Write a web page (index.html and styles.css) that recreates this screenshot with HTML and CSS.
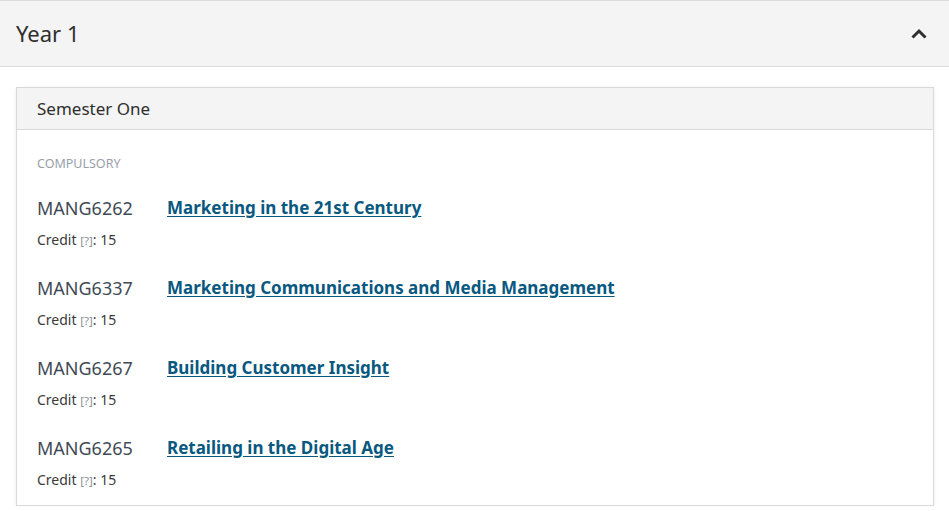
FILE: index.html
```html
<!DOCTYPE html>
<html lang="en">
<head>
<meta charset="utf-8">
<title>Year 1</title>
<link rel="stylesheet" href="styles.css">
</head>
<body>
<section class="year">
  <header class="year-header">
    <h2 class="year-title">Year 1</h2>
    <svg class="chevron" width="16" height="11" viewBox="0 0 16 11" aria-hidden="true">
      <polyline points="1.5,9.5 8,3 14.5,9.5" fill="none" stroke="#2f2f2f" stroke-width="3"/>
    </svg>
  </header>
  <div class="year-body">
    <div class="panel">
      <div class="panel-header">Semester One</div>
      <div class="panel-body">
        <div class="group-label">COMPULSORY</div>
        <ul class="modules">
          <li class="module">
            <div class="module-line"><span class="code">MANG6262</span><a class="title" href="#">Marketing in the 21st Century</a></div>
            <div class="credit">Credit <span class="help">[?]</span>: 15</div>
          </li>
          <li class="module">
            <div class="module-line"><span class="code">MANG6337</span><a class="title" href="#">Marketing Communications and Media Management</a></div>
            <div class="credit">Credit <span class="help">[?]</span>: 15</div>
          </li>
          <li class="module">
            <div class="module-line"><span class="code">MANG6267</span><a class="title" href="#">Building Customer Insight</a></div>
            <div class="credit">Credit <span class="help">[?]</span>: 15</div>
          </li>
          <li class="module">
            <div class="module-line"><span class="code">MANG6265</span><a class="title" href="#">Retailing in the Digital Age</a></div>
            <div class="credit">Credit <span class="help">[?]</span>: 15</div>
          </li>
        </ul>
      </div>
    </div>
  </div>
</section>
</body>
</html>
```
FILE: styles.css
```css
* { box-sizing: border-box; }
html, body { margin: 0; padding: 0; background: #fff; }
body {
  font-family: "Noto Sans", "Open Sans", "Liberation Sans", sans-serif;
  color: #333;
}
.year-header {
  display: flex;
  align-items: center;
  justify-content: space-between;
  height: 67px;
  background: #f4f4f4;
  border-top: 1px solid #dcdcdc;
  border-bottom: 1px solid #dcdcdc;
  padding: 0 22px 0 16px;
}
.year-title {
  margin: 0;
  font-size: 22px;
  font-weight: 400;
  line-height: 65px;
  color: #2e2e2e;
}
.chevron { display: block; margin-top: -1px; }
.year-body { padding: 20px 15px 0 16px; }
.panel {
  border: 1px solid #d9d9d9;
  background: #fff;
  box-shadow: 0 1px 4px rgba(0,0,0,0.08);
}
.panel-header {
  background: #f4f4f4;
  border-bottom: 1px solid #d9d9d9;
  padding: 0 20px;
  font-size: 17px;
  line-height: 41px;
  color: #2e2e2e;
}
.panel-body { padding: 26px 20px 15px 20px; }
.group-label {
  font-size: 12.5px;
  line-height: 16px;
  color: #98a1a9;
}
.modules {
  list-style: none;
  margin: 22px 0 0 0;
  padding: 0;
  display: flex;
  flex-direction: column;
  gap: 24px;
}
.module-line {
  display: flex;
  align-items: center;
  height: 28px;
  line-height: 28px;
}
.code {
  width: 130px;
  flex: none;
  font-size: 18px;
  color: #3f4a55;
}
.title {
  font-size: 17px;
  font-weight: 700;
  color: #08587f;
  text-decoration: underline;
  text-underline-offset: 2px;
}
.credit {
  margin-top: 8px;
  height: 20px;
  font-size: 14px;
  line-height: 20px;
  color: #3a3a3a;
}
.help { font-size: 11.5px; line-height: 1; color: #8a8f96; }
```
